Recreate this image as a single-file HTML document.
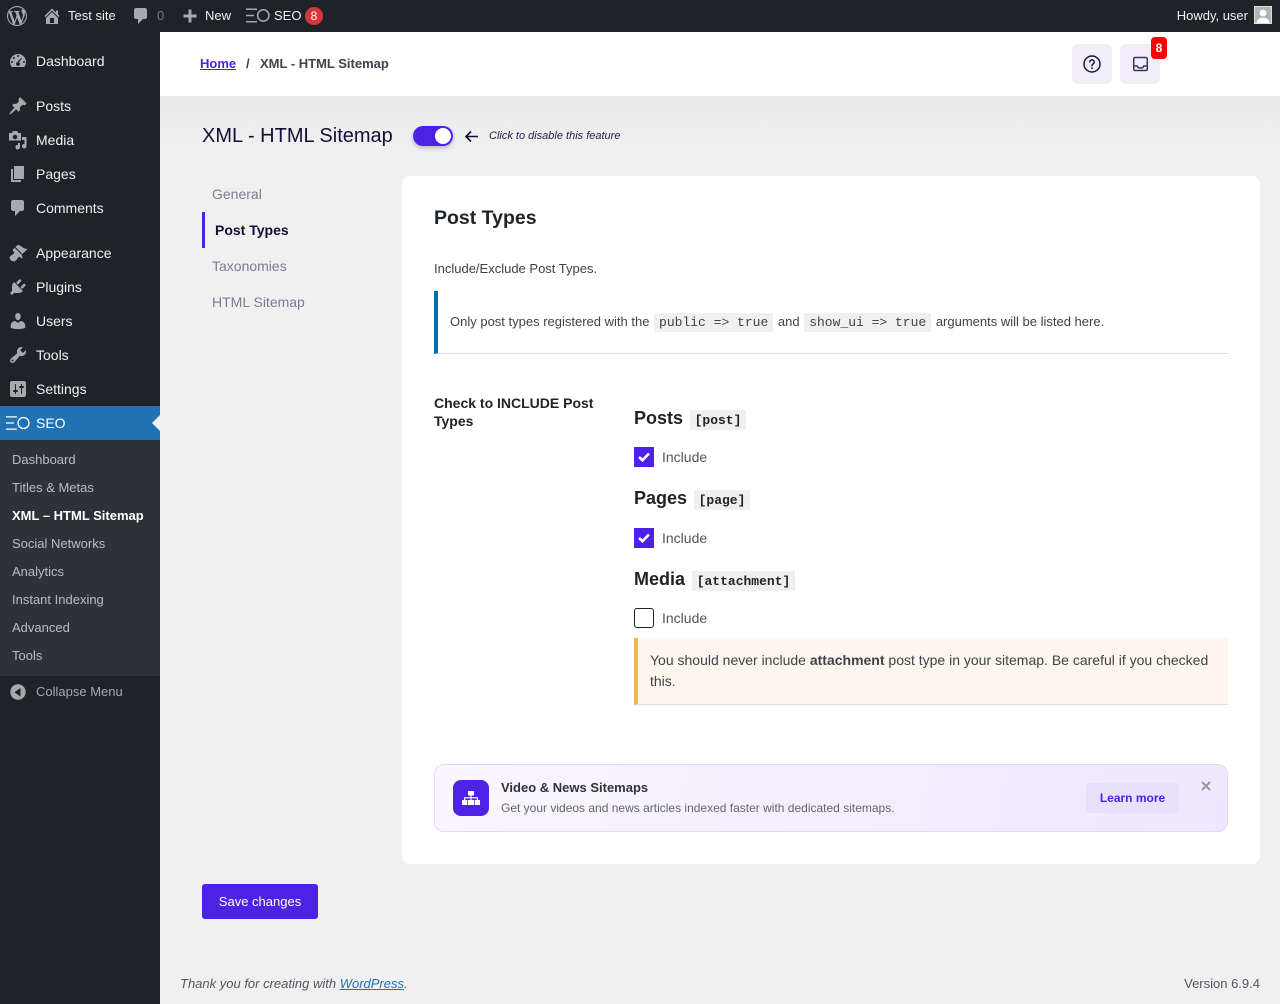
<!DOCTYPE html>
<html lang="en"><head><meta charset="utf-8"><title>XML - HTML Sitemap</title>
<style>
*{box-sizing:border-box}
html,body{margin:0;padding:0}
body{width:1280px;height:1004px;position:relative;overflow:hidden;background:#f0f0f1;font-family:"Liberation Sans",sans-serif;font-size:13px;color:#3c434a}
.a{position:absolute}
.t{position:absolute;white-space:nowrap;line-height:20px}
svg{position:absolute;display:block}
.i{fill:#a7aaad}
.m{font-size:14px;color:#f0f0f1;left:36px}
.s{font-size:13px;color:rgba(240,246,252,.7);left:12px}
.ab{font-size:13px;color:#f0f0f1}
.tab{font-size:14px;color:#7d7a93;left:212px}
code{font-family:"Liberation Mono",monospace;background:#f0f0f1;padding:2px 5px;margin:0 1px;font-size:13px;color:#3c434a}
.h3{font-size:18px;font-weight:700;color:#1d2327;left:634px;line-height:24px}
.cd{position:absolute;height:20px;background:#efefef;font:700 13px/22px "Liberation Mono",monospace;color:#1d2327;text-align:center;white-space:nowrap}
.cb{position:absolute;left:634px;width:20px;height:20px;background:#4e21e7}
.lb{font-size:14px;color:#50575e;left:662px}
</style></head><body>

<!-- sidebar -->
<div class="a" style="left:0;top:0;width:160px;height:1004px;background:#1d2327"></div>
<div class="a" style="left:0;top:0;width:1280px;height:32px;background:#1d2327"></div>
<div class="a" style="left:0;top:406px;width:160px;height:34px;background:#2271b1"></div>
<div class="a" style="left:0;top:440px;width:160px;height:236px;background:#2c3338"></div>
<div class="a" style="left:152px;top:415px;width:0;height:0;border-top:8px solid transparent;border-bottom:8px solid transparent;border-right:8px solid #f0f0f1"></div>

<!-- admin bar -->
<svg style="left:7px;top:6px" width="20" height="20" viewBox="0 0 20 20" class="i"><path d="M20 10c0-5.51-4.49-10-10-10C4.48 0 0 4.49 0 10c0 5.52 4.48 10 10 10 5.51 0 10-4.48 10-10zM7.78 15.37L4.37 6.22c.55-.02 1.17-.08 1.17-.08.5-.06.44-1.13-.06-1.11 0 0-1.45.11-2.37.11-.18 0-.37 0-.58-.01C4.12 2.69 6.87 1.11 10 1.11c2.33 0 4.45.87 6.05 2.34-.68-.11-1.65.39-1.65 1.58 0 .74.45 1.36.9 2.1.35.61.55 1.36.55 2.46 0 1.49-1.4 5-1.4 5l-3.03-8.37c.54-.02.82-.17.82-.17.5-.05.44-1.25-.06-1.22 0 0-1.44.12-2.38.12-.87 0-2.33-.12-2.33-.12-.5-.03-.56 1.2-.06 1.22l.92.08 1.26 3.41zM17.41 10c.24-.64.74-1.87.43-4.25.7 1.29 1.05 2.71 1.05 4.25 0 3.29-1.73 6.24-4.4 7.78.97-2.59 1.94-5.2 2.92-7.78zM6.1 18.09C3.12 16.65 1.11 13.53 1.11 10c0-1.3.23-2.48.72-3.59C3.25 10.3 4.67 14.2 6.1 18.09zm4.03-6.63l2.58 6.98c-.86.29-1.76.45-2.71.45-.79 0-1.57-.11-2.29-.33.81-2.38 1.62-4.74 2.42-7.1z"/></svg>
<svg style="left:42px;top:6px" width="20" height="20" viewBox="0 0 20 20" class="i"><path fill-rule="evenodd" d="M16 8.5l1.53 1.53-1.06 1.06L10 4.62l-6.47 6.47-1.06-1.06L10 2.5l4 4v-2h2v4zm-6-2.46l6 5.99V18H4v-5.97zM12 17v-5H8v5h4z"/></svg>
<div class="t ab" style="left:68px;top:6px">Test site</div>
<svg style="left:131px;top:6px" width="20" height="20" viewBox="0 0 20 20" class="i"><path d="M5 2h9c1.1 0 2 .9 2 2v7c0 1.1-.9 2-2 2h-2l-5 5v-5H5c-1.1 0-2-.9-2-2V4c0-1.1.9-2 2-2z"/></svg>
<div class="t ab" style="left:157px;top:6px;color:#787c82">0</div>
<svg style="left:180px;top:6px" width="20" height="20" viewBox="0 0 20 20" class="i"><path d="M17 7v3h-5v5H9v-5H4V7h5V2h3v5h5z" transform="translate(-.5 1.5)"/></svg>
<div class="t ab" style="left:205px;top:6px">New</div>
<svg style="left:246px;top:8px" width="26" height="15" viewBox="0 0 26 15" fill="none" stroke="#a7aaad" stroke-width="1.5"><path d="M0 1.200h11M0 7.500h8M0 13.800h11"/><circle cx="17.300" cy="7.500" r="5.700"/></svg>
<div class="t ab" style="left:274px;top:6px">SEO</div>
<div class="a" style="left:305px;top:7px;width:18px;height:18px;border-radius:50%;background:#d63638;color:#fff;font-size:12px;line-height:18px;text-align:center">8</div>
<div class="t ab" style="right:32px;top:6px">Howdy, user</div>
<div class="a" style="left:1254px;top:6px;width:18px;height:18px;background:#b4b4b4;border:1px solid #ddd;overflow:hidden">
<svg style="left:0;top:0" width="16" height="16" viewBox="0 0 16 16" fill="#fff"><circle cx="8" cy="6" r="3.400"/><path d="M1.500 16c0-3.600 3-5.200 6.500-5.200s6.500 1.600 6.500 5.200z"/></svg></div>

<!-- menu icons -->
<svg style="left:8px;top:51px" width="20" height="20" viewBox="0 0 20 20" class="i"><path fill-rule="evenodd" d="M3.76 16h12.48A7.98 7.98 0 0 0 18 11c0-4.41-3.59-8-8-8s-8 3.590-8 8c0 1.900.66 3.630 1.760 5zM10 4c.55 0 1 .45 1 1s-.45 1-1 1-1-.45-1-1 .45-1 1-1zM6 6c.55 0 1 .45 1 1s-.45 1-1 1-1-.45-1-1 .45-1 1-1zm8.010 1L11 11.500c.5.400 1 1 1 1.500 0 1.100-.9 2-2 2s-2-.9-2-2c0-.8.5-1.500 1.200-1.800L13.010 7zM4 10c.55 0 1 .45 1 1s-.45 1-1 1-1-.45-1-1 .45-1 1-1zm12 0c.55 0 1 .45 1 1s-.45 1-1 1-1-.45-1-1 .45-1 1-1z"/></svg>
<svg style="left:8px;top:96px" width="20" height="20" viewBox="0 0 20 20" class="i"><path d="M10.440 3.020l1.820-1.820 6.360 6.350-1.830 1.820c-1.050-.68-2.480-.57-3.410.36l-.75.75c-.92.93-1.040 2.350-.35 3.410l-1.830 1.820-2.410-2.410-2.800 2.790c-.42.42-3.380 2.710-3.800 2.290s1.860-3.390 2.280-3.810l2.790-2.790L4.100 9.360l1.830-1.820c1.050.69 2.480.57 3.400-.36l.75-.75c.93-.92 1.050-2.350.36-3.410z"/></svg>
<svg style="left:8px;top:130px" width="20" height="20" viewBox="0 0 20 20" class="i"><path fill-rule="evenodd" d="M1 3h3l.8-2h4.400l.8 2h3v7.500H1zm6 1.700a2.300 2.300 0 1 0 0 4.600 2.300 2.300 0 0 0 0-4.600zM18.500 7v9.200a2.300 2.300 0 1 1-2-2.280V10H14V7zM12 13v4.200a2.300 2.300 0 1 1-2-2.280V13z"/></svg>
<svg style="left:8px;top:164px" width="20" height="20" viewBox="0 0 20 20" class="i"><path d="M6 15V2h10v13H6zm-1 1h8v2H3V5h2v11z"/></svg>
<svg style="left:8px;top:198px" width="20" height="20" viewBox="0 0 20 20" class="i"><path d="M5 2h9c1.100 0 2 .9 2 2v7c0 1.100-.9 2-2 2h-2l-5 5v-5H5c-1.100 0-2-.9-2-2V4c0-1.100.9-2 2-2z"/></svg>
<svg style="left:8px;top:243px" width="20" height="20" viewBox="0 0 20 20" class="i"><path d="M14.480 11.060L7.410 3.990l1.500-1.500c.5-.56 2.300-.47 3.510.32 1.210.8 1.430 1.280 2.910 2.100 1.180.64 2.450 1.260 4.450.85zm-.71.71L6.700 4.700 4.930 6.470c-.39.39-.39 1.020 0 1.410l1.060 1.060c.39.39.39 1.030 0 1.420-.6.6-1.430 1.150-2.210 1.690-.35.25-.7.53-1.010.84C1.430 13.230.88 15.140 2.870 17.130s3.890 1.440 5.240.1c.31-.31.59-.66.84-1.010.54-.78 1.090-1.610 1.690-2.210.39-.39 1.030-.39 1.420 0l1.060 1.060c.39.39 1.020.39 1.410 0z"/></svg>
<svg style="left:8px;top:277px" width="20" height="20" viewBox="0 0 20 20" class="i"><path d="M13.110 4.360L9.870 7.600 8 5.730l3.240-3.240c.35-.34 1.050-.2 1.560.32.52.51.66 1.210.31 1.550zm-8 1.770l.91-1.120 9.010 9.010-1.190.84c-.71.71-2.630 1.160-3.820 1.160H6.140L4.900 17.260c-.59.59-1.540.59-2.120 0-.59-.58-.59-1.530 0-2.120l1.240-1.240v-3.880c0-1.130.4-3.190 1.090-3.890zm7.260 3.970l3.240-3.240c.34-.35 1.040-.21 1.550.31.52.51.66 1.210.31 1.550l-3.240 3.250z"/></svg>
<svg style="left:8px;top:311px" width="20" height="20" viewBox="0 0 20 20" class="i"><path d="M10 9.250c-2.270 0-2.730-3.440-2.730-3.440C7 4.020 7.820 2 9.970 2c2.160 0 2.980 2.020 2.710 3.810 0 0-.41 3.440-2.680 3.440zm0 2.570L12.720 10c2.390 0 4.520 2.330 4.520 4.530v2.490s-3.650 1.130-7.240 1.130c-3.650 0-7.240-1.130-7.240-1.130v-2.490c0-2.250 1.940-4.480 4.470-4.480z"/></svg>
<svg style="left:8px;top:345px" width="20" height="20" viewBox="0 0 20 20" class="i"><path fill-rule="evenodd" d="M16.680 9.770c-1.340 1.340-3.300 1.670-4.950.99l-5.410 6.520c-.99.99-2.590.99-3.580 0s-.99-2.590 0-3.570l6.520-5.420c-.68-1.650-.35-3.610.99-4.950 1.280-1.280 3.120-1.620 4.720-1.060l-2.890 2.890 2.820 2.820 2.860-2.870c.53 1.580.18 3.390-1.080 4.650zM3.810 16.210c.4.39 1.040.39 1.430 0 .4-.4.4-1.040 0-1.430-.39-.4-1.030-.4-1.430 0-.39.39-.39 1.030 0 1.430z"/></svg>
<svg style="left:8px;top:379px" width="20" height="20" viewBox="0 0 20 20" class="i"><path fill-rule="evenodd" d="M18 16V4c0-1.100-.9-2-2-2H4c-1.100 0-2 .9-2 2v12c0 1.100.9 2 2 2h12c1.100 0 2-.9 2-2zM8 11h1c.55 0 1 .45 1 1s-.45 1-1 1H8v1.500c0 .28-.22.5-.5.5s-.5-.22-.5-.5V13H6c-.55 0-1-.45-1-1s.45-1 1-1h1V5.500c0-.28.22-.5.5-.5s.5.22.5.5V11zm5-2h-1c-.55 0-1-.45-1-1s.45-1 1-1h1V5.500c0-.28.22-.5.5-.5s.5.22.5.5V7h1c.55 0 1 .45 1 1s-.45 1-1 1h-1v5.500c0 .28-.22.5-.5.5s-.5-.22-.5-.5V9z"/></svg>
<svg style="left:6px;top:416px" width="25" height="14" viewBox="0 0 25 14" fill="none" stroke="#fff" stroke-width="1.300"><path d="M0 .9h11M0 7h8M0 13.100h11"/><circle cx="17.500" cy="7" r="5.500"/></svg>
<svg style="left:8px;top:682px" width="20" height="20" viewBox="0 0 20 20" class="i"><path fill-rule="evenodd" d="M10 2.300a7.700 7.700 0 1 1 0 15.400 7.700 7.700 0 0 1 0-15.400zM12.500 6 6.500 10.300l6 4.300z"/></svg>

<!-- menu text -->
<div class="t m" style="top:51px">Dashboard</div>
<div class="t m" style="top:96px">Posts</div>
<div class="t m" style="top:130px">Media</div>
<div class="t m" style="top:164px">Pages</div>
<div class="t m" style="top:198px">Comments</div>
<div class="t m" style="top:243px">Appearance</div>
<div class="t m" style="top:277px">Plugins</div>
<div class="t m" style="top:311px">Users</div>
<div class="t m" style="top:345px">Tools</div>
<div class="t m" style="top:379px">Settings</div>
<div class="t m" style="top:413px;color:#fff">SEO</div>
<div class="t s" style="top:450px">Dashboard</div>
<div class="t s" style="top:478px">Titles &amp; Metas</div>
<div class="t s" style="top:506px;color:#fff;font-weight:700">XML – HTML Sitemap</div>
<div class="t s" style="top:534px">Social Networks</div>
<div class="t s" style="top:562px">Analytics</div>
<div class="t s" style="top:590px">Instant Indexing</div>
<div class="t s" style="top:618px">Advanced</div>
<div class="t s" style="top:646px">Tools</div>
<div class="t" style="left:36px;top:682px;color:#a7aaad">Collapse Menu</div>

<!-- header -->
<div class="a" style="left:160px;top:96px;width:1120px;height:80px;background:linear-gradient(#ebebeb,#f0f0f1 70%)"></div>
<div class="a" style="left:160px;top:32px;width:1120px;height:64px;background:#fff"></div>
<div class="t" style="left:200px;top:54px;font-weight:700;color:#4e21e7;text-decoration:underline">Home</div>
<div class="t" style="left:246px;top:54px;font-weight:700">/</div>
<div class="t" style="left:260px;top:54px;font-weight:700">XML - HTML Sitemap</div>
<div class="a" style="left:1072px;top:44px;width:40px;height:40px;border-radius:6px;background:#f1eefa"></div>
<svg style="left:1082px;top:54px" width="20" height="20" viewBox="0 0 20 20" fill="none" stroke="#1a1440" stroke-width="1.500" stroke-linecap="round"><circle cx="10" cy="10" r="8"/><path d="M7.800 8a2.200 2.200 0 1 1 3.400 1.900c-.8.5-1.200.9-1.200 1.800"/><path d="M10 14.200v.1" stroke-width="1.800"/></svg>
<div class="a" style="left:1120px;top:44px;width:40px;height:40px;border-radius:6px;background:#f1eefa"></div>
<svg style="left:1132px;top:56px" width="17" height="16" viewBox="0 0 17 16" fill="none" stroke="#3a3560" stroke-width="1.500"><rect x="1.700" y="1.500" width="13.600" height="13" rx="1.500"/><path d="M1.700 10h3.500c.4 1.500 1.700 2 3.300 2s2.900-.5 3.300-2h3.500"/></svg>
<div class="a" style="left:1151px;top:37px;width:16px;height:22px;border-radius:4px;background:#f00;color:#fff;font-size:12px;font-weight:700;line-height:22px;text-align:center">8</div>

<!-- title row -->
<div class="t" style="left:202px;top:125px;font-size:20px;line-height:22px;color:#140f38">XML - HTML Sitemap</div>
<div class="a" style="left:413px;top:126px;width:40px;height:20px;border-radius:10px;background:#4e21e7;box-shadow:0 2px 4px rgba(60,40,120,.3)"></div>
<div class="a" style="left:435px;top:128px;width:16px;height:16px;border-radius:50%;background:#fff"></div>
<svg style="left:464px;top:130px" width="15" height="13" viewBox="0 0 15 13" fill="none" stroke="#140f38" stroke-width="1.600"><path d="M14 6.500H2M7 1.500 2 6.500l5 5"/></svg>
<div class="t" style="left:489px;top:126px;font-size:11px;font-style:italic;color:#241d48">Click to disable this feature</div>

<!-- tabs -->
<div class="t tab" style="top:184px">General</div>
<div class="a" style="left:202px;top:212px;width:3px;height:36px;background:#4e21e7"></div>
<div class="t tab" style="left:215px;top:220px;font-weight:700;color:#140f38">Post Types</div>
<div class="t tab" style="top:256px">Taxonomies</div>
<div class="t tab" style="top:292px">HTML Sitemap</div>

<!-- card -->
<div class="a" style="left:402px;top:176px;width:858px;height:688px;border-radius:8px;background:#fff"></div>
<div class="t" style="left:434px;top:206px;font-size:19.5px;line-height:24px;font-weight:700;color:#1d2327">Post Types</div>
<div class="t" style="left:434px;top:259px">Include/Exclude Post Types.</div>
<div class="a" style="left:434px;top:291px;width:794px;height:63px;border-left:4px solid #0073aa;border-bottom:1px solid #dcdcde;background:#fff"></div>
<div class="t" style="left:450px;top:312px">Only post types registered with the <code>public =&gt; true</code> and <code>show_ui =&gt; true</code> arguments will be listed here.</div>
<div class="a" style="left:434px;top:394px;width:170px;font-size:14px;line-height:18px;font-weight:700;color:#1d2327">Check to INCLUDE Post Types</div>

<div class="t h3" style="top:406px">Posts</div>
<div class="cd" style="left:690px;top:410px;width:56px">[post]</div>
<div class="cb" style="top:447px"></div>
<svg style="left:634px;top:447px" width="20" height="20" viewBox="0 0 20 20" fill="none" stroke="#fff" stroke-width="2.600"><path d="M5 10l3.500 3.200L15 6.500"/></svg>
<div class="t lb" style="top:447px">Include</div>

<div class="t h3" style="top:486px">Pages</div>
<div class="cd" style="left:694px;top:490px;width:56px">[page]</div>
<div class="cb" style="top:528px"></div>
<svg style="left:634px;top:528px" width="20" height="20" viewBox="0 0 20 20" fill="none" stroke="#fff" stroke-width="2.600"><path d="M5 10l3.500 3.200L15 6.500"/></svg>
<div class="t lb" style="top:528px">Include</div>

<div class="t h3" style="top:567px">Media</div>
<div class="cd" style="left:692px;top:571px;width:103px">[attachment]</div>
<div class="a" style="left:634px;top:608px;width:20px;height:20px;border:1px solid #1d2327;border-radius:3px;background:#fff"></div>
<div class="t lb" style="top:608px">Include</div>

<div class="a" style="left:634px;top:638px;width:594px;height:67px;background:#fef6ec;border-left:4px solid #f0b849;border-bottom:1px solid #dcdcde"></div>
<div class="a" style="left:650px;top:650px;width:570px;font-size:14px;line-height:21px;color:#3c434a">You should never include <b>attachment</b> post type in your sitemap. Be careful if you checked this.</div>

<!-- promo -->
<div class="a" style="left:434px;top:764px;width:794px;height:68px;border-radius:10px;border:1px solid #e2d9fb;background:linear-gradient(100deg,#f9f6ff,#efe7fe)"></div>
<div class="a" style="left:453px;top:780px;width:36px;height:36px;border-radius:8px;background:#4e21e7"></div>
<svg style="left:461px;top:790px" width="20" height="16" viewBox="0 0 20 16" fill="#fff"><rect x="7" y="1" width="6" height="4.500"/><rect x="1" y="10" width="5.300" height="5"/><rect x="7" y="10" width="6" height="5"/><rect x="13.700" y="10" width="5.300" height="5"/><path d="M10 5v5M3.600 10V7.800h12.800V10" fill="none" stroke="#fff" stroke-width="1.100"/></svg>
<div class="t" style="left:501px;top:778px;font-weight:700;color:#333">Video &amp; News Sitemaps</div>
<div class="t" style="left:501px;top:798px;font-size:12px;color:#666">Get your videos and news articles indexed faster with dedicated sitemaps.</div>
<div class="a" style="left:1086px;top:783px;width:93px;height:30px;border-radius:4px;background:#e8e0fd;color:#4e21e7;font-size:12px;font-weight:700;line-height:30px;text-align:center">Learn more</div>
<svg style="left:1201px;top:781px" width="10" height="10" viewBox="0 0 10 10" stroke="#999" stroke-width="2"><path d="M1 1l8 8M9 1l-8 8"/></svg>

<!-- save -->
<div class="a" style="left:202px;top:884px;width:116px;height:35px;border-radius:3px;background:#4e21e7;color:#fff;font-size:13px;line-height:35px;text-align:center">Save changes</div>

<!-- footer -->
<div class="t" style="left:180px;top:974px;font-style:italic;color:#50575e">Thank you for creating with <span style="color:#2271b1;text-decoration:underline">WordPress</span>.</div>
<div class="t" style="right:20px;top:974px;color:#50575e">Version 6.9.4</div>
</body></html>
